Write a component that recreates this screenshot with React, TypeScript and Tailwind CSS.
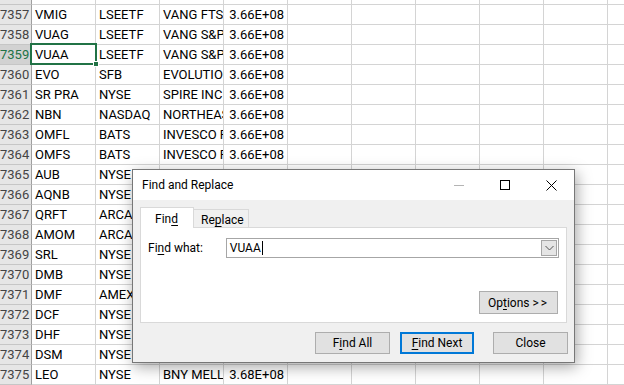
const rows: string[][] = [
  ['7357', 'VMIG', 'LSEETF', 'VANG FTSE ALL-WLD', '3.66E+08'],
  ['7358', 'VUAG', 'LSEETF', 'VANG S&P 500', '3.66E+08'],
  ['7359', 'VUAA', 'LSEETF', 'VANG S&P 500', '3.66E+08'],
  ['7360', 'EVO', 'SFB', 'EVOLUTION', '3.66E+08'],
  ['7361', 'SR PRA', 'NYSE', 'SPIRE INC', '3.66E+08'],
  ['7362', 'NBN', 'NASDAQ', 'NORTHEAST', '3.66E+08'],
  ['7363', 'OMFL', 'BATS', 'INVESCO RUSSELL', '3.66E+08'],
  ['7364', 'OMFS', 'BATS', 'INVESCO RUSSELL', '3.66E+08'],
  ['7365', 'AUB', 'NYSE', 'ATLANTIC UNION', '3.66E+08'],
  ['7366', 'AQNB', 'NYSE', 'ALGONQUIN', '3.66E+08'],
  ['7367', 'QRFT', 'ARCA', 'QRAFT AI', '3.67E+08'],
  ['7368', 'AMOM', 'ARCA', 'QRAFT AI', '3.67E+08'],
  ['7369', 'SRL', 'NYSE', 'SCULLY ROYALTY', '3.67E+08'],
  ['7370', 'DMB', 'NYSE', 'BNY MELLON', '3.67E+08'],
  ['7371', 'DMF', 'AMEX', 'BNY MELLON', '3.67E+08'],
  ['7372', 'DCF', 'NYSE', 'BNY MELLON', '3.67E+08'],
  ['7373', 'DHF', 'NYSE', 'BNY MELLON', '3.67E+08'],
  ['7374', 'DSM', 'NYSE', 'BNY MELLON', '3.68E+08'],
  ['7375', 'LEO', 'NYSE', 'BNY MELLON', '3.68E+08'],
];

const blanks = [0, 1, 2, 3, 4, 5];

function GridRow({ row }: { row?: string[] }) {
  const selected = row?.[0] === '7359';
  return (
    <div className={`flex shrink-0 ${row ? 'h-[20px]' : 'h-[5px]'}`}>
      <div
        className={`w-[32px] shrink-0 border-r border-b border-r-[#9f9f9f] border-b-[#c6c6c6] pr-[3px] text-right leading-[19px] ${
          selected ? 'bg-[#d2d2d2] text-[#217346]' : 'bg-[#e6e6e6] text-[#444]'
        }`}
      >
        {row?.[0]}
      </div>
      <div className="w-[64px] shrink-0 overflow-hidden whitespace-nowrap border-r border-b border-[#d4d4d4] pl-[3px] leading-[19px]">
        {row?.[1]}
      </div>
      <div className="w-[64px] shrink-0 overflow-hidden whitespace-nowrap border-r border-b border-[#d4d4d4] pl-[3px] leading-[19px]">
        {row?.[2]}
      </div>
      <div className="w-[64px] shrink-0 overflow-hidden whitespace-nowrap border-r border-b border-[#d4d4d4] pl-[3px] leading-[19px]">
        {row?.[3]}
      </div>
      <div className="w-[64px] shrink-0 overflow-hidden whitespace-nowrap border-r border-b border-[#d4d4d4] pr-[3px] text-right leading-[19px]">
        {row?.[4]}
      </div>
      {blanks.map((i) => (
        <div key={i} className="w-[64px] shrink-0 border-r border-b border-[#d4d4d4]" />
      ))}
    </div>
  );
}

function FindDialog() {
  return (
    <div className="absolute left-[132px] top-[169px] flex h-[194px] w-[443px] flex-col border border-[#777] bg-[#f0f0f0] text-[12px] text-black shadow-[2px_4px_14px_rgba(0,0,0,0.35)]">
      <div className="flex h-[30px] shrink-0 items-center bg-white">
        <span className="flex-1 pl-[9px]">Find and Replace</span>
        <div className="flex h-full w-[46px] items-center justify-center">
          <div className="h-px w-[10px] bg-[#b4b4b4]" />
        </div>
        <div className="flex h-full w-[46px] items-center justify-center">
          <div className="h-[10px] w-[10px] border border-black" />
        </div>
        <div className="flex h-full w-[46px] items-center justify-center">
          <svg width="11" height="11" viewBox="0 0 11 11">
            <path d="M0.5 0.5 L10.5 10.5 M10.5 0.5 L0.5 10.5" stroke="#000" strokeWidth="1" fill="none" />
          </svg>
        </div>
      </div>

      <div className="flex flex-1 flex-col px-[7px] pt-[7px]">
        <div className="relative z-10 -mb-px flex h-[21px] items-end">
          <div className="h-[21px] w-[54px] border border-b-0 border-[#d9d9d9] bg-white pl-[14px] pt-[2px]">
            Fin<u className="underline-offset-2">d</u>
          </div>
          <div className="h-[19px] w-[55px] border border-l-0 border-[#d9d9d9] pl-[7px] pt-[1px]">
            Re<u className="underline-offset-2">p</u>lace
          </div>
        </div>

        <div className="flex h-[96px] flex-col border border-[#d9d9d9] bg-white px-[7px] pt-[10px]">
          <div className="flex items-center">
            <span className="w-[78px]">
              Fi<u className="underline-offset-2">n</u>d what:
            </span>
            <div className="flex h-[20px] w-[334px] border border-[#a6a6a6] bg-white">
              <div className="flex flex-1 items-center pl-[3px]">
                VUAA
                <span className="ml-px h-[14px] w-px bg-black" />
              </div>
              <div className="m-px flex w-[16px] items-center justify-center border border-[#a6a6a6] bg-[#e5e5e5]">
                <svg width="9" height="6" viewBox="0 0 9 6">
                  <path d="M0.5 1 L4.5 5 L8.5 1" stroke="#555" strokeWidth="1" fill="none" />
                </svg>
              </div>
            </div>
          </div>
          <div className="mb-[8px] mt-auto flex justify-end pr-px">
            <button className="h-[23px] w-[79px] border border-[#adadad] bg-[#e1e1e1]">
              Op<u className="underline-offset-2">t</u>ions <span className="tracking-[2px]">&gt;&gt;</span>
            </button>
          </div>
        </div>

        <div className="-mr-px mt-[9px] flex justify-end">
          <button className="h-[22px] w-[75px] border border-[#adadad] bg-[#e1e1e1]">
            F<u className="underline-offset-2">i</u>nd All
          </button>
          <button className="ml-[10px] h-[22px] w-[74px] border-2 border-[#0078d7] bg-[#e1e1e1]">
            <u className="underline-offset-2">F</u>ind Next
          </button>
          <button className="ml-[19px] h-[22px] w-[75px] border border-[#adadad] bg-[#e1e1e1]">
            Close
          </button>
        </div>
      </div>
    </div>
  );
}

export default function App() {
  return (
    <div className="relative h-[385px] w-[624px] overflow-hidden bg-white font-['Segoe_UI',Roboto,sans-serif] text-[13px] text-black">
      <div className="flex flex-col">
        <GridRow />
        {rows.map((r) => (
          <GridRow key={r[0]} row={r} />
        ))}
      </div>

      {/* active cell */}
      <div className="absolute left-[30px] top-[43px] h-[22px] w-[67px] border-2 border-[#217346]" />
      <div className="absolute left-[93px] top-[61px] h-[6px] w-[6px] border border-white bg-[#217346]" />

      <FindDialog />
    </div>
  );
}
